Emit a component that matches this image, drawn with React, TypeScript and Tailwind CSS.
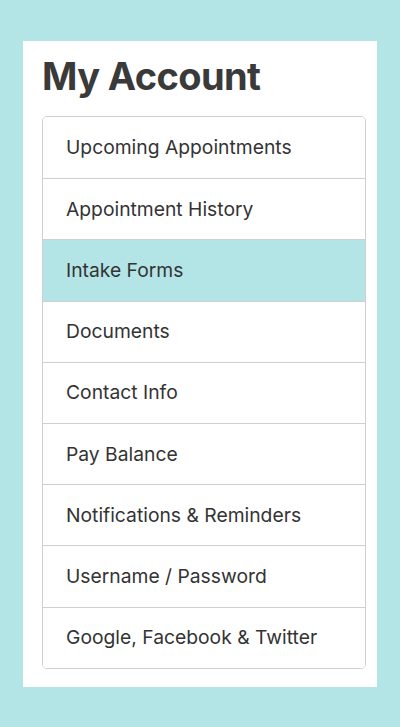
const items = [
  'Upcoming Appointments',
  'Appointment History',
  'Intake Forms',
  'Documents',
  'Contact Info',
  'Pay Balance',
  'Notifications & Reminders',
  'Username / Password',
  'Google, Facebook & Twitter',
];

export default function App() {
  const active = 'Intake Forms';
  return (
    <div
      className="min-h-[727px] w-full bg-[#b3e5e6] pt-[41px] px-[23px]"
      style={{ fontFamily: 'Inter, "Open Sans", Arial, sans-serif' }}
    >
      <div className="bg-white pl-[19px] pr-[11px] pt-[12px] pb-[18px]">
        <h1 className="text-[38px] font-bold leading-[46px] tracking-[-0.6px] text-[#3a3a3a] mb-[17px]">
          My Account
        </h1>
        <ul className="rounded-[5px] border border-[#cfcfcf] overflow-hidden">
          {items.map((item, i) => (
            <li
              key={item}
              className={`h-[61.2px] flex items-center pl-[23px] text-[19.3px] text-[#333] ${
                i > 0 ? 'border-t border-[#cfcfcf]' : ''
              } ${item === active ? 'bg-[#b3e5e6]' : 'bg-white'}`}
            >
              {item}
            </li>
          ))}
        </ul>
      </div>
    </div>
  );
}
